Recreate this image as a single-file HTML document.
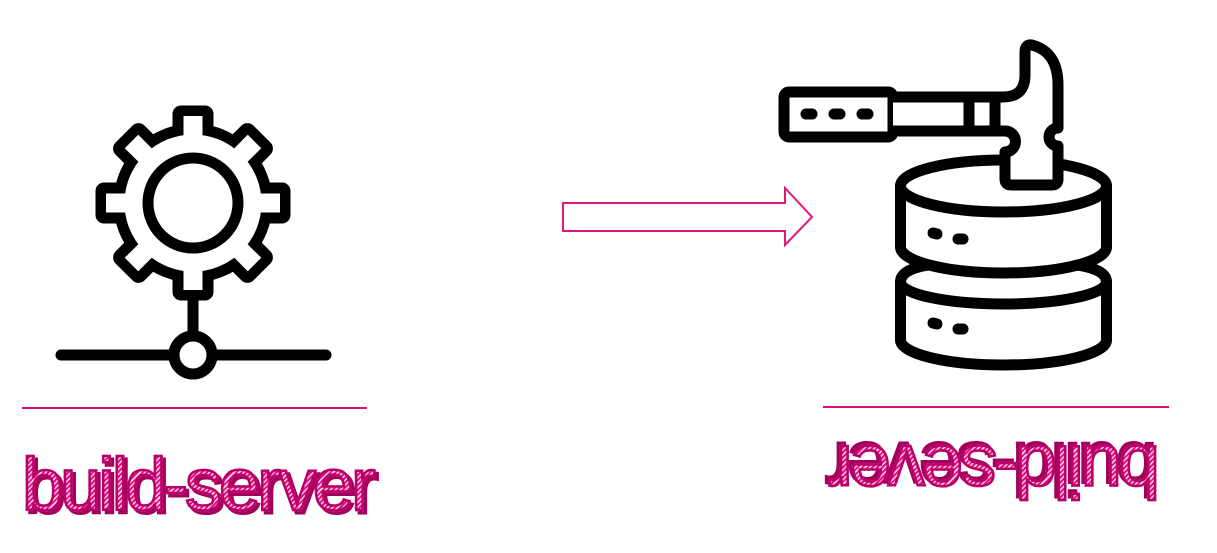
<!DOCTYPE html>
<html><head><meta charset="utf-8"><style>
html,body{margin:0;padding:0;background:#fff;}
body{width:1217px;height:553px;position:relative;overflow:hidden;}
.t{position:absolute;font-family:"Liberation Sans",Arial,sans-serif;font-size:74px;line-height:74px;letter-spacing:-3px;white-space:nowrap;}
.sh{color:#a3005c;-webkit-text-stroke:3px #a3005c;}
.fg{color:transparent;background:repeating-linear-gradient(135deg,#e2157f 0 2px,#ffd0e6 2px 3.5px);-webkit-background-clip:text;background-clip:text;-webkit-text-stroke:2.5px #b8006a;}
.line{position:absolute;height:2px;background:#d8107a;}
</style></head><body>
<svg width="1217" height="553" style="position:absolute;left:0;top:0" fill="none" stroke="#000" stroke-width="11" stroke-linecap="round" stroke-linejoin="round">
 <g transform="translate(193,203)">
  <g fill="#fff">
   <rect x="-15" y="-92" width="30" height="30" rx="3"/>
   <rect x="-15" y="-92" width="30" height="30" rx="3" transform="rotate(45)"/>
   <rect x="-15" y="-92" width="30" height="30" rx="3" transform="rotate(90)"/>
   <rect x="-15" y="-92" width="30" height="30" rx="3" transform="rotate(135)"/>
   <rect x="-15" y="-92" width="30" height="30" rx="3" transform="rotate(180)"/>
   <rect x="-15" y="-92" width="30" height="30" rx="3" transform="rotate(225)"/>
   <rect x="-15" y="-92" width="30" height="30" rx="3" transform="rotate(270)"/>
   <rect x="-15" y="-92" width="30" height="30" rx="3" transform="rotate(315)"/>
  </g>
  <circle r="74" fill="#fff"/>
  <g fill="#fff" stroke="none">
   <rect x="-9.5" y="-87" width="19" height="24"/>
   <rect x="-9.5" y="-87" width="19" height="24" transform="rotate(45)"/>
   <rect x="-9.5" y="-87" width="19" height="24" transform="rotate(90)"/>
   <rect x="-9.5" y="-87" width="19" height="24" transform="rotate(135)"/>
   <rect x="-9.5" y="-87" width="19" height="24" transform="rotate(180)"/>
   <rect x="-9.5" y="-87" width="19" height="24" transform="rotate(225)"/>
   <rect x="-9.5" y="-87" width="19" height="24" transform="rotate(270)"/>
   <rect x="-9.5" y="-87" width="19" height="24" transform="rotate(315)"/>
  </g>
  <circle r="45"/>
 </g>
 <line x1="193" y1="298" x2="193" y2="336"/>
 <line x1="61" y1="355" x2="173" y2="355"/>
 <line x1="213" y1="355" x2="326" y2="355"/>
 <circle cx="193" cy="355" r="19"/>
 <polygon points="563,203 785,203 785,188 812,217 785,245 785,231 563,231" stroke="#e0187a" stroke-width="2" stroke-linejoin="miter"/>
 <path d="M900.5,282 Q900.5,268 935,264 L1070,264 Q1106.5,268 1106.5,282 L1106.5,340 A103 25 0 0 1 900.5,340 Z" fill="#fff"/>
 <path d="M900.5,282 A103 22 0 0 0 1106.5,282"/>
 <line x1="933" y1="323" x2="937" y2="324"/>
 <line x1="958" y1="329" x2="963" y2="329"/>
 <path d="M900.5,186 A103 26 0 0 1 1106.5,186 L1106.5,247 A103 26 0 0 1 900.5,247 Z" fill="#fff"/>
 <path d="M900.5,186 A103 26 0 0 0 1106.5,186"/>
 <line x1="933" y1="233" x2="937" y2="234"/>
 <line x1="958" y1="239" x2="963" y2="239"/>
 <rect x="784" y="92" width="109" height="45" rx="5" fill="#fff"/>
 <line x1="806" y1="114" x2="812" y2="114"/>
 <line x1="834" y1="114" x2="840" y2="114"/>
 <line x1="862" y1="114" x2="868" y2="114"/>
 <path d="M893,97 L1003,97 Q1025,97 1025,75 L1025,52 Q1025,44 1032,45 Q1058,52 1058,85 L1058,128 A9 9 0 0 0 1058,146 L1058,179 Q1058,185 1052,185 L1011,185 Q1005,185 1005,179 L1005,152 A10.5 10.5 0 0 0 1005,131 L893,131" fill="#fff"/>
 <line x1="969" y1="97" x2="969" y2="131"/>
 <line x1="995" y1="97" x2="995" y2="131"/>
</svg>
<div class="line" style="left:22px;top:407px;width:345px"></div>
<div class="line" style="left:823px;top:406px;width:346px"></div>
<div class="t sh" style="left:25px;top:451px">build-server</div>
<div class="t fg" style="left:22px;top:448px">build-server</div>
<div style="position:absolute;left:828px;top:434px;transform:rotate(180deg);transform-origin:166px 37px;width:332px;height:74px">
 <div class="t sh" style="left:3px;top:3px">build-sever</div>
 <div class="t fg" style="left:0;top:0">build-sever</div>
</div>
</body></html>
